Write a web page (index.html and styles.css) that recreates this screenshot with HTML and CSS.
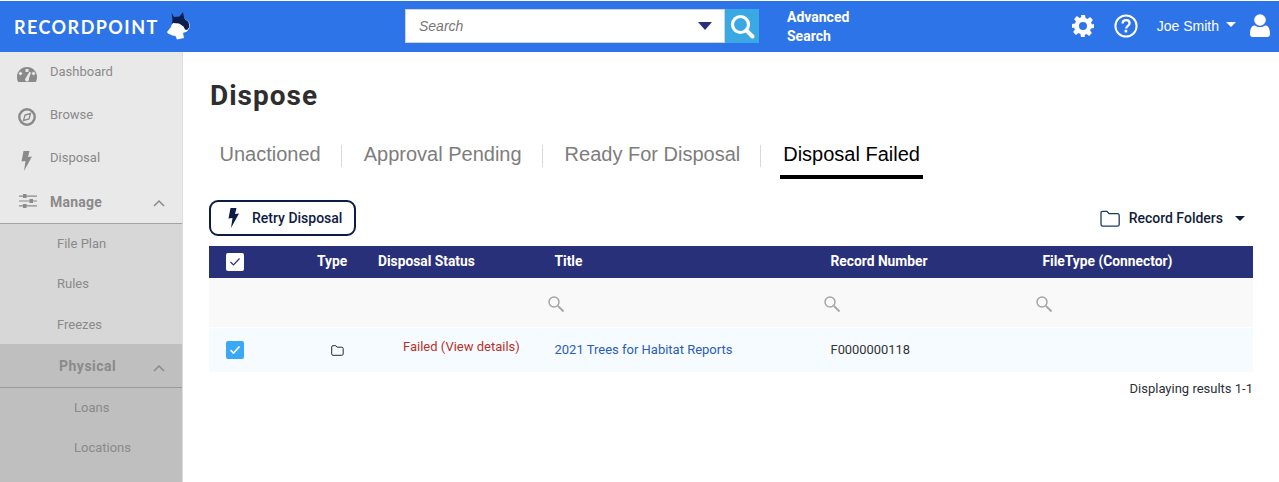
FILE: index.html
```html
<!DOCTYPE html>
<html lang="en">
<head>
<meta charset="utf-8">
<title>Dispose</title>
<link rel="stylesheet" href="styles.css">
</head>
<body>
<header class="topbar">
  <div class="brand">
    <span class="brand-name">RECORDPOINT</span>
    <svg class="brand-mark" width="23" height="28" viewBox="0 0 23 28">
      <path d="M5.500 9l-1.500 6-4 5 1 1.500 4.500 2 3 .5L10 27.500l7-1.500-1-5 4-1.500 3-4.500-1-5-4-3-8-.5z" fill="#fff"/>
      <path d="M4.500 1l2.500 4 5.500-.5L16 0l1.200 6.500 4.300 3.500 1 5-2.500 3-2-.5-1.500-3-4.500-3-6-.5-1.500 2 1-5.500z" fill="#0b1f50"/>
      <path d="M9 12l4 .3 2.500 2.700-1 .8-4-1z" fill="#fff"/>
    </svg>
  </div>
  <div class="search-group">
    <div class="search-box">
      <span class="search-placeholder">Search</span>
      <span class="search-caret"></span>
    </div>
    <button class="search-btn" aria-label="Search">
      <svg width="26" height="26" viewBox="0 0 26 26" fill="none" stroke="#fff"><circle cx="11.5" cy="11.5" r="8" stroke-width="3.2"/><path d="M17.5 17.5l6 6" stroke-width="4" stroke-linecap="round"/></svg>
    </button>
  </div>
  <a class="advanced">Advanced<br>Search</a>
  <div class="top-right">
    <svg class="gear" width="24" height="24" viewBox="0 0 24 24"><path fill="#fff" fill-rule="evenodd" d="M10 1h4l.6 3.1 1.9.8 2.6-1.8 2.8 2.8-1.800 2.600.8 1.900L23 10v4l-3.100.6-.8 1.900 1.800 2.600-2.800 2.800-2.600-1.800-1.900.8L14 23h-4l-.6-3.100-1.900-.8-2.600 1.800-2.800-2.800 1.800-2.600-.8-1.900L1 14v-4l3.100-.6.8-1.900-1.800-2.600 2.800-2.800 2.600 1.800 1.900-.8zM12 8a4 4 0 1 0 0 8 4 4 0 0 0 0-8z"/></svg>
    <svg class="help" width="24" height="24" viewBox="0 0 24 24" fill="none"><circle cx="12" cy="12" r="10.6" stroke="#fff" stroke-width="2"/><path d="M8.6 9.4c0-2 1.500-3.300 3.500-3.300s3.500 1.200 3.500 3.100c0 2.600-3.400 2.700-3.400 5.200" stroke="#fff" stroke-width="2.300"/><rect x="10.600" y="15.800" width="2.600" height="2.600" fill="#fff"/></svg>
    <span class="user-name">Joe Smith</span>
    <span class="user-caret"></span>
    <svg class="user" width="20" height="23" viewBox="0 0 20 23"><circle cx="10" cy="6" r="5.800" fill="#fff"/><path d="M0 20c0-6 2-8.500 5-8.500 1.500 1 3 1.500 5 1.500s3.500-.5 5-1.500c3 0 5 2.500 5 8.500 0 2-1 3-3 3H3c-2 0-3-1-3-3z" fill="#fff"/></svg>
  </div>
</header>
<div class="layout">
  <nav class="sidebar">
    <a class="nav-item">
      <svg class="nav-icon nav-gauge" width="22" height="18" viewBox="0 0 22 18"><path fill="#8a8a8a" fill-rule="evenodd" d="M11 1C5 1 1 5.500 1 11c0 2 .4 3.500 1.200 5h17.600c.8-1.500 1.200-3 1.200-5C21 5.500 17 1 11 1zM9.500 3h3v3h-3zM4.500 5.500l2 2-2 2-2-2zM17.500 5.500l2 2-2 2-2-2zM13.500 5.800l1.500.7-2.100 6.100a2 2 0 1 1-3-.8z"/></svg>
      <span class="nav-label">Dashboard</span>
    </a>
    <a class="nav-item">
      <svg class="nav-icon nav-compass" width="20" height="20" viewBox="0 0 20 20" fill="none"><circle cx="10" cy="10" r="7.700" stroke="#8a8a8a" stroke-width="2.400"/><path d="M13.500 6.500l-5.500 1.500-1.500 5.500 5.500-1.500z" stroke="#8a8a8a" stroke-width="1.300"/></svg>
      <span class="nav-label">Browse</span>
    </a>
    <a class="nav-item">
      <svg class="nav-icon nav-bolt" width="12" height="20" viewBox="0 0 12 20"><path fill="#8a8a8a" d="M2.500 0h6L7 6l4-.5L3 20l1.500-10-4 .5z"/></svg>
      <span class="nav-label">Disposal</span>
    </a>
    <a class="nav-item nav-head">
      <svg class="nav-icon" width="20" height="16" viewBox="0 0 20 16" fill="#8a8a8a"><path d="M1 2.500h18v1.200H1zM1 7.400h18v1.200H1zM1 12.300h18v1.200H1z"/><rect x="5" y="1" width="3.500" height="4"/><rect x="11.500" y="6" width="3.500" height="4"/><rect x="5" y="11" width="3.500" height="4"/></svg>
      <span class="nav-label">Manage</span>
      <svg class="chev" width="12" height="8" viewBox="0 0 12 8" fill="none"><path d="M1 7l5-5 5 5" stroke="#8a8a8a" stroke-width="1.500"/></svg>
    </a>
    <div class="sub-group">
      <a class="sub-item">File Plan</a>
      <a class="sub-item">Rules</a>
      <a class="sub-item">Freezes</a>
    </div>
    <div class="physical">
      <a class="phys-head">
        <span>Physical</span>
        <svg class="chev" width="12" height="8" viewBox="0 0 12 8" fill="none"><path d="M1 7l5-5 5 5" stroke="#8a8a8a" stroke-width="1.500"/></svg>
      </a>
      <a class="phys-item">Loans</a>
      <a class="phys-item">Locations</a>
    </div>
  </nav>
  <main class="content">
    <h1 class="page-title">Dispose</h1>
    <div class="tabs">
      <a class="tab">Unactioned</a>
      <a class="tab">Approval Pending</a>
      <a class="tab">Ready For Disposal</a>
      <a class="tab tab-active">Disposal Failed</a>
    </div>
    <div class="toolbar">
      <button class="retry">
        <svg width="12" height="20" viewBox="0 0 12 20"><path fill="#0d1b45" d="M2.500 0h6L7 6l4-.5L3 20l1.500-10-4 .5z"/></svg>
        <span>Retry Disposal</span>
      </button>
      <div class="folders">
        <svg width="20" height="17" viewBox="0 0 20 17" fill="none"><path d="M1 3c0-1 .6-1.700 1.500-1.700H7l2 2.400h8.500c1 0 1.700.7 1.700 1.700v9c0 1-.7 1.700-1.700 1.700h-15C1.600 16 1 15.300 1 14.300z" stroke="#1d3a63" stroke-width="1.300"/></svg>
        <span>Record Folders</span>
        <span class="folders-caret"></span>
      </div>
    </div>
    <div class="grid">
      <div class="row head">
        <div class="c-check"><span class="check check-white"><svg width="12" height="10" viewBox="0 0 12 10" fill="none"><path d="M1.500 5l3 3 6-6.500" stroke="#29307a" stroke-width="1.200"/></svg></span></div>
        <div class="c-type">Type</div>
        <div class="c-status">Disposal Status</div>
        <div class="c-title">Title</div>
        <div class="c-num">Record Number</div>
        <div class="c-file">FileType (Connector)</div>
      </div>
      <div class="row filter">
        <div class="c-check"></div>
        <div class="c-type"></div>
        <div class="c-status"></div>
        <div class="c-title"><svg class="mag" width="18" height="18" viewBox="0 0 18 18" fill="none" stroke="#a5a5a5"><circle cx="7" cy="7" r="5" stroke-width="1.500"/><path d="M11 11l5.500 5.500" stroke-width="1.800"/></svg></div>
        <div class="c-num"><svg class="mag" width="18" height="18" viewBox="0 0 18 18" fill="none" stroke="#a5a5a5"><circle cx="7" cy="7" r="5" stroke-width="1.500"/><path d="M11 11l5.500 5.500" stroke-width="1.800"/></svg></div>
        <div class="c-file"><svg class="mag" width="18" height="18" viewBox="0 0 18 18" fill="none" stroke="#a5a5a5"><circle cx="7" cy="7" r="5" stroke-width="1.500"/><path d="M11 11l5.500 5.500" stroke-width="1.800"/></svg></div>
      </div>
      <div class="row data">
        <div class="c-check"><span class="check check-blue"><svg width="12" height="10" viewBox="0 0 12 10" fill="none"><path d="M1.500 5l3 3 6-6.500" stroke="#fff" stroke-width="1.600"/></svg></span></div>
        <div class="c-type"><svg class="row-folder" width="13" height="11" viewBox="0 0 13 11" fill="none"><path d="M.7 2C.7 1.200 1.200.7 2 .7h2.800l1.300 1.500h4.700c.8 0 1.400.6 1.400 1.400v5.300c0 .8-.6 1.400-1.400 1.400H2c-.8 0-1.300-.6-1.300-1.400z" stroke="#222a3a" stroke-width="1"/></svg></div>
        <div class="c-status failed">Failed (View details)</div>
        <div class="c-title link">2021 Trees for Habitat Reports</div>
        <div class="c-num num">F0000000118</div>
        <div class="c-file"></div>
      </div>
    </div>
    <div class="results">Displaying results 1-1</div>
  </main>
</div>
</body>
</html>
```
FILE: styles.css
```css
* { box-sizing: border-box; }
html, body { height: 100%; }
body {
  margin: 0;
  padding-top: 1px;
  height: 482px;
  overflow: hidden;
  background: #fff;
  font-family: Roboto, "Liberation Sans", sans-serif;
  display: flex;
  flex-direction: column;
}
.topbar {
  height: 51px;
  flex: none;
  background: #2d74e8;
  display: flex;
  align-items: center;
  color: #fff;
}
.brand { width: 405px; display: flex; align-items: center; padding-left: 14px; gap: 8px; flex: none; }
.brand-name { font-family: Lato, sans-serif; font-weight: 700; font-size: 18px; letter-spacing: 1.45px; line-height: 24px; }
.brand-mark { flex: none; margin-bottom: 1px; }
.search-group { display: flex; flex: none; width: 354px; height: 34px; margin-bottom: 1px; }
.search-box {
  width: 320px;
  background: #fff;
  border: 1px solid #cfd3da;
  display: flex;
  align-items: center;
  justify-content: space-between;
  padding: 0 12px 0 13px;
}
.search-placeholder { font-family: "Liberation Sans", sans-serif; font-style: italic; font-size: 14px; color: #777; }
.search-caret { width: 0; height: 0; border-left: 7px solid transparent; border-right: 7px solid transparent; border-top: 8px solid #29307a; }
.search-btn { width: 34px; height: 34px; border: 0; padding: 0; background: #3aa8e2; display: flex; align-items: center; justify-content: center; }
.advanced { width: 80px; margin-left: 28px; font-weight: 700; font-size: 14px; line-height: 19px; color: #fff; flex: none; }
.top-right { margin-left: auto; display: flex; align-items: center; padding-right: 9px; margin-bottom: 2px; }
.help { margin-left: 19px; }
.user-name { margin-left: 19px; font-family: "Liberation Sans", sans-serif; font-size: 14px; }
.user-caret { margin-left: 7px; margin-top: -2px; width: 0; height: 0; border-left: 5px solid transparent; border-right: 5px solid transparent; border-top: 5px solid #fff; }
.user { margin-left: 14px; }
.layout { flex: 1; display: flex; min-height: 0; }
.sidebar { width: 183px; flex: none; background: #e9e9e9; border-right: 1px solid #ddd; color: #8a8a8a; font-size: 13px; display: flex; flex-direction: column; }
.nav-item { height: 43px; display: flex; position: relative; align-items: flex-start; flex: none; padding-left: 17px; }
.nav-icon { flex: none; position: absolute; top: 14px; left: 17px; }
.nav-gauge { left: 16px; }
.nav-compass { top: 12px; }
.nav-bolt { left: 21px; top: 13px; }
.nav-label { margin-left: 33px; line-height: 16px; padding-top: 12px; }
.nav-head { border-bottom: 1px solid #a3a3a3; padding-top: 4px; }
.nav-head .nav-icon { left: 18px; top: 12px; }
.nav-head .nav-label { font-weight: 700; font-size: 14px; letter-spacing: .25px; padding-top: 9px; margin-left: 33px; }
.chev { position: absolute; right: 17px; top: 18px; }
.sub-group { background: #d7d7d7; display: flex; flex-direction: column; height: 120px; flex: none; }
.sub-item { height: 40.400px; padding-left: 57px; line-height: 40px; flex: none; }
.physical { background: #bfbfbf; flex: 1; display: flex; flex-direction: column; }
.phys-head { height: 44px; position: relative; flex: none; border-bottom: 1px solid #9a9a9a; padding-left: 59px; font-weight: 700; font-size: 14px; line-height: 44px; letter-spacing: .5px; }
.phys-head .chev { top: 20px; }
.phys-item { height: 40px; padding-left: 74px; line-height: 40px; flex: none; }
.content { flex: 1; min-width: 0; padding: 0 26px 0 26px; }
.page-title { margin: 27px 0 0 1px; font-size: 28px; line-height: 34px; font-weight: 700; color: #2e2e2e; letter-spacing: 1px; }
.tabs { display: flex; margin-top: 23px; height: 43px; font-family: "Liberation Sans", sans-serif; font-size: 20px; color: #7d7d7d; }
.tab { position: relative; height: 43px; padding: 0 3px; line-height: 36px; }
.tab + .tab { margin-left: 37px; }
.tab:first-child { margin-left: 7.500px; }
.tab:not(:last-child)::after { content: ""; position: absolute; right: -18px; top: 9px; height: 22px; width: 1px; background: #d9d9d9; }
.tab-active { color: #000; border-bottom: 4px solid #000; }
.toolbar { display: flex; justify-content: space-between; align-items: center; margin-top: 21px; height: 36px; }
.retry { height: 36px; width: 147px; border: 2px solid #0d1b45; border-radius: 9px; background: #fff; color: #0d1b45; font: 500 14px Roboto, sans-serif; display: flex; align-items: center; padding: 0 0 0 17px; gap: 12px; }
.folders { display: flex; align-items: center; font-weight: 500; font-size: 14px; color: #111d3a; padding-right: 8px; }
.folders span:first-of-type { margin-left: 9px; }
.folders-caret { margin-left: 12px; margin-top: 1px; width: 0; height: 0; border-left: 5px solid transparent; border-right: 5px solid transparent; border-top: 5px solid #111d3a; }
.grid { margin-top: 10px; font-size: 13px; }
.row { display: grid; grid-template-columns: 108px 61px 176.500px 276px 212px 210px; align-items: center; }
.head { height: 32px; background: #29307a; color: #fff; font-weight: 700; font-size: 13.800px; }
.head > div:not(.c-check) { padding-bottom: 2px; }
.filter { height: 49px; background: #f9f9f9; }
.data { height: 45px; background: #f6fbff; border-top: 1px solid #fff; }
.c-check { padding-left: 17px; display: flex; align-items: center; }
.check { width: 18px; height: 18px; border-radius: 2px; display: flex; align-items: center; justify-content: center; }
.check-white { background: #fff; }
.check-blue { background: #3aa9f5; }
.mag { display: block; margin: 3px 0 0 -7.500px; }
.c-type { white-space: nowrap; }
.c-status { white-space: nowrap; }
.row-folder { display: block; margin-left: 14px; }
.failed { color: #b8322a; padding: 0 0 8px 25px; }
.link { color: #2a5db8; padding-bottom: 2px; }
.num { color: #333; padding-bottom: 2px; font-size: 12.900px; }
.results { margin-top: 9px; text-align: right; font-size: 13px; line-height: 16px; color: #2b2f3a; }
```
